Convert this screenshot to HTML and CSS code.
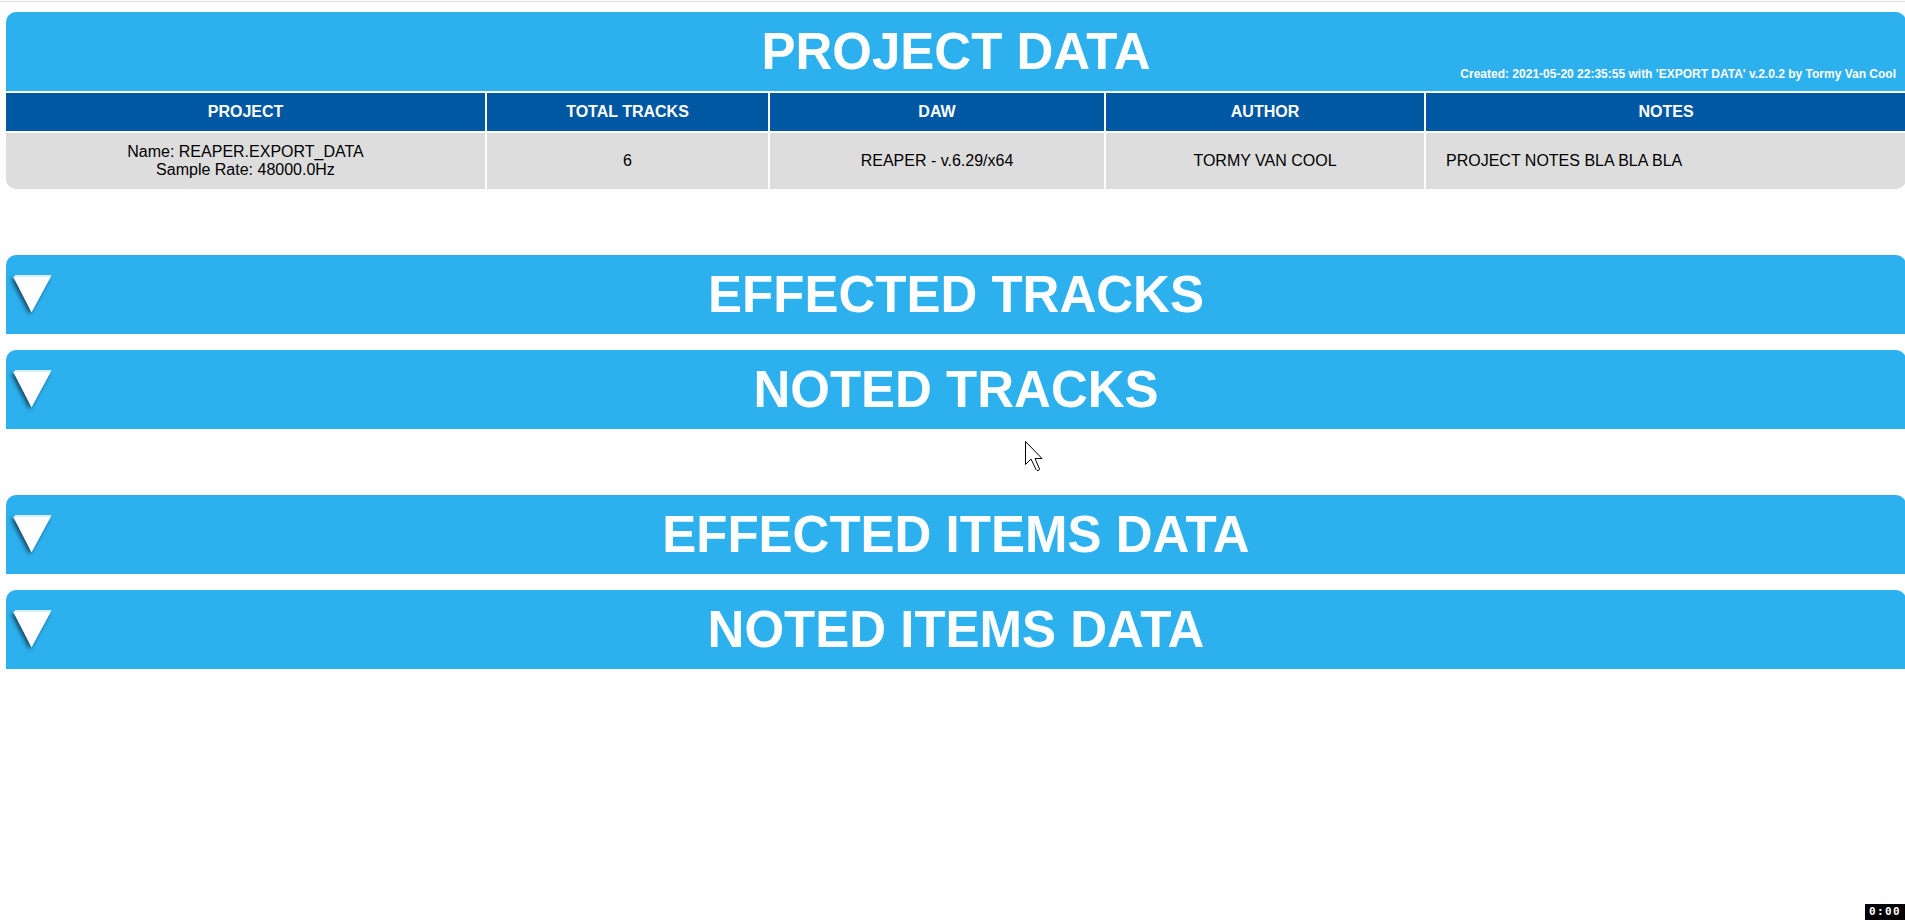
FILE: index.html
```
<!DOCTYPE html>
<html lang="en">
<head>
<meta charset="utf-8">
<title>Project Data</title>
<link rel="stylesheet" href="styles.css">
</head>
<body>
<main class="page">
  <section class="project">
    <header class="bar">
      <h1 class="title">PROJECT DATA</h1>
      <p class="created">Created: 2021-05-20 22:35:55 with 'EXPORT DATA' v.2.0.2 by Tormy Van Cool</p>
    </header>
    <div class="grid">
      <div class="head">PROJECT</div>
      <div class="head">TOTAL TRACKS</div>
      <div class="head">DAW</div>
      <div class="head">AUTHOR</div>
      <div class="head">NOTES</div>
      <div class="cell first">Name: REAPER.EXPORT_DATA<br>Sample Rate: 48000.0Hz</div>
      <div class="cell">6</div>
      <div class="cell">REAPER - v.6.29/x64</div>
      <div class="cell">TORMY VAN COOL</div>
      <div class="cell notes">PROJECT NOTES BLA BLA BLA</div>
    </div>
  </section>
  <div class="group">
    <section class="bar"><svg class="arrow" viewBox="0 0 48 48"><path class="arrow-shape" d="M7 12.5H45L25.5 48.5Z"/><path class="arrow-edge" d="M9 11H45.5L44.5 13H9Z"/></svg><h2 class="title">EFFECTED TRACKS</h2></section>
    <section class="bar"><svg class="arrow" viewBox="0 0 48 48"><path class="arrow-shape" d="M7 12.5H45L25.5 48.5Z"/><path class="arrow-edge" d="M9 11H45.5L44.5 13H9Z"/></svg><h2 class="title">NOTED TRACKS</h2></section>
  </div>
  <div class="group">
    <section class="bar"><svg class="arrow" viewBox="0 0 48 48"><path class="arrow-shape" d="M7 12.5H45L25.5 48.5Z"/><path class="arrow-edge" d="M9 11H45.5L44.5 13H9Z"/></svg><h2 class="title">EFFECTED ITEMS DATA</h2></section>
    <section class="bar"><svg class="arrow" viewBox="0 0 48 48"><path class="arrow-shape" d="M7 12.5H45L25.5 48.5Z"/><path class="arrow-edge" d="M9 11H45.5L44.5 13H9Z"/></svg><h2 class="title">NOTED ITEMS DATA</h2></section>
  </div>
</main>
<svg class="cursor" viewBox="0 0 20 32"><path d="M.5 .5V23.5L6 18L11 28.5L12 29.5H13.5L14.5 28L10 17.5H17Z"/></svg>
<div class="timer">0:00</div>
</body>
</html>
```
FILE: styles.css
```
* { box-sizing: border-box; }
body {
  margin: 0;
  height: 920px;
  overflow: hidden;
  background: #fefefe;
  color: #000;
  font: 16px/18px "Liberation Sans", Arial, sans-serif;
  border-top: 1px solid #fefefe;
}
.page {
  width: 1906px;
  padding: 10px 0 0 6px;
  border-top: 1px solid #ddd;
}
.bar {
  position: relative;
  height: 79px;
  border-radius: 10px 10px 0 0;
  background: #2db0ee;
  color: #fefefe;
}
.title {
  margin: 0;
  padding-top: 10px;
  text-align: center;
  font-size: 51px;
  line-height: 60px;
  font-weight: bold;
}
.created {
  position: absolute;
  right: 10px;
  bottom: 9px;
  margin: 0;
  font-size: 12px;
  line-height: 16px;
  font-weight: bold;
}
.grid {
  display: grid;
  grid-template-columns: 479px 281px 334px 318px 480px;
  grid-template-rows: 38px 56px;
  gap: 2px;
  padding-top: 2px;
}
.head, .cell {
  display: flex;
  align-items: center;
  justify-content: center;
  text-align: center;
}
.head { background: #0057a2; color: #fefefe; font-weight: bold; }
.cell { background: #ddd; }
.first { border-bottom-left-radius: 10px; }
.notes { justify-content: flex-start; padding-left: 20px; border-bottom-right-radius: 10px; }
.group { display: grid; gap: 16px; margin-top: 66px; }
.arrow {
  position: absolute;
  left: 0;
  top: 9px;
  width: 48px;
  height: 48px;
  overflow: visible;
}
.arrow-shape { fill: #fefefe; filter: drop-shadow(-2px 2px 2px rgba(0, 0, 0, .6)); }
.arrow-edge { fill: #d5effc; }
.cursor { position: absolute; left: 1025px; top: 441px; width: 20px; height: 32px; }
.cursor path { fill: #fff; stroke: #000; }
.timer {
  position: absolute;
  right: 0;
  bottom: 0;
  width: 40px;
  height: 16px;
  padding-left: 4px;
  background: #000;
  color: #fff;
  font: bold 11px/15px "DejaVu Sans Mono", monospace;
  letter-spacing: 1.4px;
  white-space: nowrap;
}
```
